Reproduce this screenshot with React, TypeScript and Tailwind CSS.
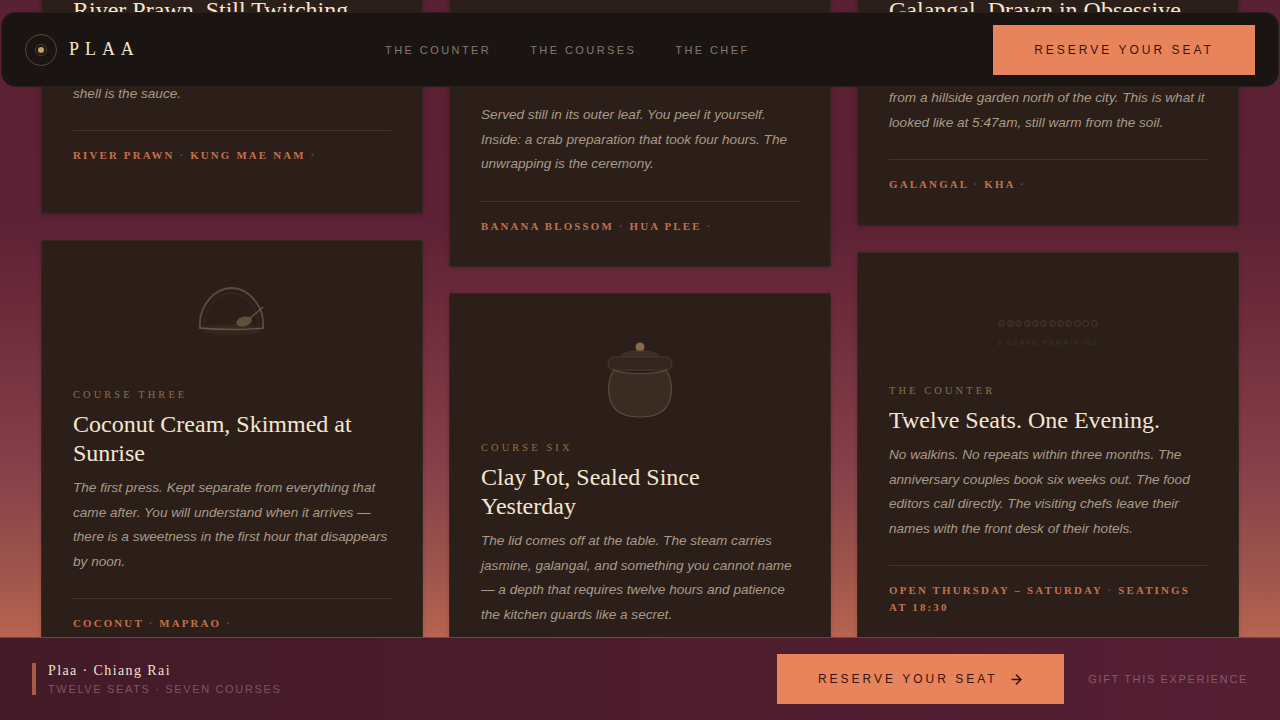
import React from "react";
import { ArrowRight } from "lucide-react";

const sans = "font-['Liberation_Sans',Arial,sans-serif]";
const serif = "font-['Liberation_Serif','Times_New_Roman',serif]";

function Cloche() {
  return (
    <svg width="70" height="52" viewBox="0 0 70 52" fill="none" className="opacity-70">
      <ellipse cx="35" cy="46" rx="29" ry="4" fill="#4a3a28" opacity="0.45" />
      <path d="M7 43 C12 38 55 38 63 43 L62 44 L8 44 Z" fill="#4a3c2c" opacity="0.5" />
      <path d="M3 43 C1 22 17 3 34.5 3 C52 3 68 22 66 43" stroke="#6f604a" strokeWidth="1.8" fill="none" />
      <path d="M7 43 C6 25 20 8 34.5 8 C49 8 63 25 62 43" stroke="#443629" strokeWidth="0.8" fill="none" />
      <path d="M2 43 Q35 46 67 43" stroke="#7d6c54" strokeWidth="1.3" fill="none" />
      <ellipse cx="47" cy="36.5" rx="8" ry="4.8" fill="#75664a" transform="rotate(-15 47 36.5)" />
      <path d="M52 34 L66 22" stroke="#85755c" strokeWidth="1.2" />
    </svg>
  );
}

function Pot() {
  return (
    <svg width="70" height="78" viewBox="0 0 70 78" fill="none">
      <circle cx="35" cy="7" r="4.5" fill="#8a6a4c" />
      <path d="M13 22 C14 13 24 11 35 11 C46 11 56 13 57 22 Z" fill="#3d2d24" stroke="#46362b" strokeWidth="1" />
      <rect x="3" y="17" width="64" height="13" rx="6.5" fill="#33261f" stroke="#4a3a2f" strokeWidth="1" />
      <path d="M9 30 C2 40 2 56 8 66 C13 74 22 77 35 77 C48 77 57 74 62 66 C68 56 68 40 61 30 C50 35 20 35 9 30 Z" fill="#3a2c22" stroke="#5f4c3c" strokeWidth="1.2" />
    </svg>
  );
}

function Seats() {
  return (
    <div className="flex flex-col items-center gap-[12px] opacity-30">
      <div className="flex gap-[1.4px]">
        {Array.from({ length: 12 }).map((_, i) => (
          <span
            key={i}
            className={i < 9 ? "w-[7px] h-[7px] rounded-full border border-[#7a6850] bg-[#46382a]" : "w-[7px] h-[7px] rounded-full border border-[#8a7860]"}
          />
        ))}
      </div>
      <span className={`${sans} text-[7px] leading-[8px] tracking-[0.27em] text-[#6a5a46]`}>3 SEATS REMAINING</span>
    </div>
  );
}

function Card({
  eyebrow,
  title,
  body,
  tags,
  icon,
  iconClass,
  pb = "pb-[31px]",
  titleMb = "mb-[8px]",
}: {
  eyebrow?: string;
  title: React.ReactNode;
  body: React.ReactNode;
  tags: React.ReactNode;
  icon?: React.ReactNode;
  iconClass?: string;
  pb?: string;
  titleMb?: string;
}) {
  return (
    <article className={`bg-[#2c1f1a] border border-[#352820] rounded-[2px] px-[31px] pt-[31px] ${pb} shadow-[0_1px_4px_rgba(0,0,0,0.15)]`}>
      {icon && <div className={`flex justify-center ${iconClass}`}>{icon}</div>}
      {eyebrow && (
        <div className={`${serif} text-[10.4px] leading-[12px] tracking-[0.3em] text-[#8c7044] mb-[9px]`}>{eyebrow}</div>
      )}
      <h2 className={`${serif} text-[24px] leading-[29px] font-normal text-[#f5e6d0] ${titleMb}`}>{title}</h2>
      <p className={`${sans} italic text-[13.6px] leading-[24.48px] text-[#a89a88]`}>{body}</p>
      <div className="h-px bg-[#43352a] mt-[24px] mb-[16px]" />
      <p className={`${serif} font-bold text-[10.88px] leading-[17px] tracking-[0.2em] text-[#c4704c]`}>{tags}</p>
    </article>
  );
}

const Dot = () => <span className="text-[#6f4a38]">·</span>;

export default function App() {
  return (
    <div className="relative w-full h-screen overflow-hidden flex flex-col bg-[linear-gradient(180deg,#5a2034_0%,#5c2135_30%,#6f2c3b_45%,#85404a_65%,#a0564c_80%,#bb6650_90%)]">
      <header className="absolute top-[12px] left-[1px] right-[1px] h-[75px] z-20 rounded-[14px] bg-[#1a1412] border border-[#2a201b] flex items-center justify-between pl-[23px] pr-[23px]">
        <div className="flex items-center gap-[12px]">
          <div className="w-[32px] h-[32px] rounded-full border border-[#5a4632] flex items-center justify-center">
            <div className="w-[12px] h-[12px] rounded-full border border-[#4c3b2a] flex items-center justify-center">
              <div className="w-[6px] h-[6px] rounded-full bg-[#c4a062]" />
            </div>
          </div>
          <span className={`${serif} text-[18px] tracking-[0.33em] text-[#f5e6d0]`}>PLAA</span>
        </div>
        <nav className={`${sans} flex items-center gap-[39px] text-[11px] tracking-[0.22em] text-[#857a70] pt-[1px] pl-[2px]`}>
          <a>THE COUNTER</a>
          <a>THE COURSES</a>
          <a>THE CHEF</a>
        </nav>
        <button className={`${sans} w-[262px] h-[50px] bg-[#e8845c] text-[#3a1408] text-[12px] tracking-[0.25em]`}>
          RESERVE YOUR SEAT
        </button>
      </header>

      <main className="flex-1 min-h-0 overflow-hidden grid grid-cols-3 gap-[26px] px-[41px] items-start">
        <div className="flex flex-col gap-[26px] -mt-[36px]">
          <Card
            title="River Prawn. Still Twitching"
            body={<>Pulled from the water an hour before service and<br />grilled over longan wood. Crack it open yourself. The<br />shell is the sauce.</>}
            tags={<>RIVER PRAWN <Dot /> KUNG MAE NAM <Dot /></>}
            pb="pb-[48.7px]"
          />
          <Card
            icon={<Cloche />}
            iconClass="pt-[13px] h-[99px] mb-[18px]"
            eyebrow="COURSE THREE"
            title={<>Coconut Cream, Skimmed at Sunrise</>}
            body="The first press. Kept separate from everything that came after. You will understand when it arrives — there is a sweetness in the first hour that disappears by noon."
            tags={<>COCONUT <Dot /> MAPRAO <Dot /></>}
          />
        </div>
        <div className="flex flex-col gap-[26px] -mt-[36px]">
          <Card
            icon={<div />}
            iconClass="h-[60.2px]"
            title="Banana Blossom, Wrapped"
            titleMb="mb-[18px]"
            body="Served still in its outer leaf. You peel it yourself. Inside: a crab preparation that took four hours. The unwrapping is the ceremony."
            tags={<>BANANA BLOSSOM <Dot /> HUA PLEE <Dot /></>}
            pb="pb-[31.3px]"
          />
          <Card
            icon={<Pot />}
            iconClass="pt-[15px] h-[99px] mb-[18.5px]"
            eyebrow="COURSE SIX"
            title={<>Clay Pot, Sealed Since Yesterday</>}
            body="The lid comes off at the table. The steam carries jasmine, galangal, and something you cannot name — a depth that requires twelve hours and patience the kitchen guards like a secret."
            tags={<>CLAY POT <Dot /> MO DIN <Dot /></>}
          />
        </div>
        <div className="flex flex-col gap-[26px] -mt-[36px]">
          <Card
            title={<>Galangal. Drawn in Obsessive Detail</>}
            body={<>Pulled from the ground at first light this morning<br />from a hillside garden north of the city. This is what it looked like at 5:47am, still warm from the soil.</>}
            tags={<>GALANGAL <Dot /> KHA <Dot /></>}
            pb="pb-[32px]"
          />
          <Card
            icon={<Seats />}
            iconClass="pt-[36px] h-[83px] mb-[18px]"
            eyebrow="THE COUNTER"
            title="Twelve Seats. One Evening."
            body="No walkins. No repeats within three months. The anniversary couples book six weeks out. The food editors call directly. The visiting chefs leave their names with the front desk of their hotels."
            tags={<>OPEN THURSDAY – SATURDAY <Dot /> SEATINGS AT 18:30</>}
          />
        </div>
      </main>

      <footer className="h-[83px] shrink-0 border-t border-[#6b4a40] bg-[linear-gradient(90deg,#431a28,#561f33)] flex items-center justify-between pl-[32px] pr-[32px] z-10">
        <div className="flex items-stretch gap-[12px] h-[32px]">
          <div className="w-[4px] bg-[#a85a45]" />
          <div className="flex flex-col justify-between">
            <span className={`${serif} text-[14px] leading-[16px] tracking-[0.1em] text-[#f0e0d0]`}>Plaa · Chiang Rai</span>
            <span className={`${sans} text-[11px] leading-[12px] tracking-[0.15em] text-[#7d5565]`}>TWELVE SEATS · SEVEN COURSES</span>
          </div>
        </div>
        <div className="flex items-center gap-[24px]">
          <button className={`${sans} w-[287px] h-[50px] bg-[#e8845c] text-[#3a1408] text-[12px] tracking-[0.25em] flex items-center justify-center gap-[11px]`}>
            RESERVE YOUR SEAT
            <ArrowRight size={15} strokeWidth={2.4} />
          </button>
          <a className={`${sans} text-[11px] tracking-[0.15em] text-[#855a6a]`}>GIFT THIS EXPERIENCE</a>
        </div>
      </footer>
    </div>
  );
}
